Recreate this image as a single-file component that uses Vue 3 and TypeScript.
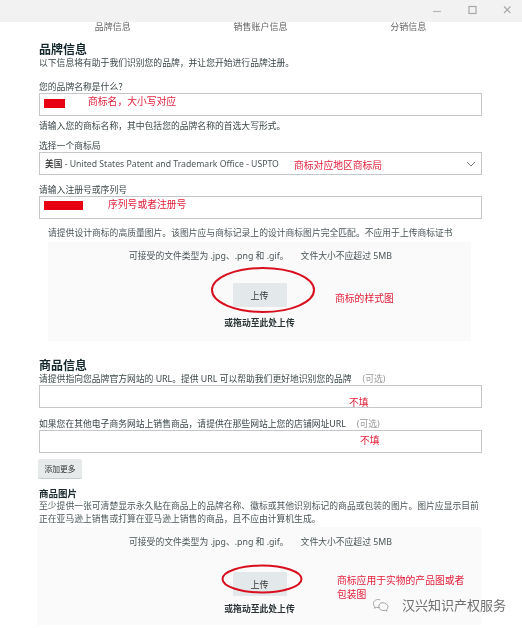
<script setup lang="ts">
const tabs = ['品牌信息', '销售账户信息', '分销信息']
</script>

<template>
  <div class="page">
    <div class="titlebar">
      <svg class="win" width="14" height="14" viewBox="0 0 14 14"><path d="M0 7.5h8" stroke="#b5b5b5" stroke-width="1.2" /></svg>
      <svg class="win" width="14" height="14" viewBox="0 0 14 14"><rect x="2" y="2.5" width="7" height="7" fill="none" stroke="#a8a8a8" stroke-width="1.2" /></svg>
      <svg class="win" width="14" height="14" viewBox="0 0 14 14"><path d="M3 2.5l6.500 6.500M9.500 2.500l-6.500 6.500" stroke="#a8a8a8" stroke-width="1.1" /></svg>
    </div>

    <div class="content">
      <div class="tabs">
        <span v-for="tab in tabs" :key="tab">{{ tab }}</span>
      </div>

      <h2 class="h-first">品牌信息</h2>
      <p class="txt">以下信息将有助于我们识别您的品牌，并让您开始进行品牌注册。</p>

      <p class="txt label l-name">您的品牌名称是什么？</p>
      <div class="field">
        <i class="mask mask-a"></i>
        <span class="note n-name">商标名，大小写对应</span>
      </div>
      <p class="txt help">请输入您的商标名称，其中包括您的品牌名称的首选大写形式。</p>

      <p class="txt label l-office">选择一个商标局</p>
      <div class="field select">
        <span class="val"><b>美国</b> - United States Patent and Trademark Office - USPTO</span>
        <span class="note n-office">商标对应地区商标局</span>
        <svg class="chev" width="10" height="6" viewBox="0 0 10 6"><path d="M1 1l4 4 4-4" fill="none" stroke="#777" stroke-width="1" /></svg>
      </div>

      <p class="txt label l-reg">请输入注册号或序列号</p>
      <div class="field">
        <i class="mask mask-b"></i>
        <span class="note n-reg">序列号或者注册号</span>
      </div>

      <p class="txt hint">请提供设计商标的高质量图片。该图片应与商标记录上的设计商标图片完全匹配。不应用于上传商标证书</p>
      <div class="drop drop-a">
        <p class="txt types">可接受的文件类型为 .jpg、.png 和 .gif。<span class="gap"></span>文件大小不应超过 5MB</p>
        <button class="upload up-a">上传</button>
        <p class="txt or or-a">或拖动至此处上传</p>
        <svg class="ring ring-a" width="104" height="46" viewBox="0 0 104 46"><ellipse cx="52" cy="23" rx="51" ry="22" fill="none" stroke="#d80f1e" stroke-width="2" /></svg>
        <span class="note n-style">商标的样式图</span>
      </div>

      <h2 class="h-second">商品信息</h2>
      <p class="txt label">请提供指向您品牌官方网站的 URL。提供 URL 可以帮助我们更好地识别您的品牌<span class="opt">(可选)</span></p>
      <div class="field">
        <span class="note n-skip-a">不填</span>
      </div>
      <p class="txt label l-shop">如果您在其他电子商务网站上销售商品，请提供在那些网站上您的店铺网址URL<span class="opt">(可选)</span></p>
      <div class="field">
        <span class="note n-skip-b">不填</span>
      </div>
      <button class="more">添加更多</button>

      <p class="txt sub">商品图片</p>
      <p class="txt para">至少提供一张可清楚显示永久贴在商品上的品牌名称、徽标或其他识别标记的商品或包装的图片。图片应显示目前正在亚马逊上销售或打算在亚马逊上销售的商品，且不应由计算机生成。</p>
      <div class="drop drop-b">
        <p class="txt types">可接受的文件类型为 .jpg、.png 和 .gif。<span class="gap"></span>文件大小不应超过 5MB</p>
        <button class="upload up-b">上传</button>
        <p class="txt or or-b">或拖动至此处上传</p>
        <svg class="ring ring-b" width="82" height="30" viewBox="0 0 82 30"><ellipse cx="41" cy="15" rx="39.500" ry="13.500" fill="none" stroke="#d80f1e" stroke-width="2" /></svg>
        <span class="note n-apply">商标应用于实物的产品图或者<br />包装图</span>
      </div>
    </div>

    <div class="mark">
      <svg width="22" height="16" viewBox="0 0 24 16"><g fill="none" stroke="#9a9a9a" stroke-width="1"><path d="M9 2.500c-4-1.500-7.500 1-7.500 4 0 1.500.7 2.500 1.700 3.300l-.4 1.700 2-1c1.200.4 2.500.5 3.500.2" /><path d="M11 5.500c3.500 0 6.500 2 6.500 4.500 0 1.200-.6 2.200-1.500 3l.4 1.700-2-1c-3.500 1-7-1-7-3.700 0-2.500 1.500-4.500 3.600-4.500z" /></g></svg>
      <span>汉兴知识产权服务</span>
    </div>
  </div>
</template>

<style>
html, body { background: #fff; }
</style>

<style scoped>
.page {
  position: relative;
  width: 522px;
  height: 628px;
  overflow: hidden;
  background: #fff;
  color: #3a4648;
  font-family: "Noto Sans", "Noto Sans CJK SC", sans-serif;
  filter: blur(0.35px);
}
.titlebar {
  height: 22px;
  background: #f2f2f2;
  display: flex;
  justify-content: flex-end;
  align-items: center;
  gap: 20px;
  padding-right: 7px;
  box-sizing: border-box;
}
.win { display: block; }
.content { width: 443px; margin-left: 39px; }
.tabs {
  display: grid;
  grid-template-columns: repeat(3, 1fr);
  height: 16px;
  text-align: center;
  font-size: 9px;
  line-height: 10px;
  color: #666;
}
h2 {
  margin: 0;
  font-size: 12px;
  line-height: 14px;
  font-weight: 700;
  color: #12262b;
}
.h-first { margin-top: 5px; }
.h-second { margin-top: 18px; }
.txt { margin: 0; font-size: 8.800px; line-height: 12px; white-space: nowrap; }
.label { height: 12px; line-height: 12px; }
.l-name { margin-top: 12px; }
.l-office { margin-top: 8px; }
.l-reg { margin-top: 9px; }
.l-shop { margin-top: 10px; }
.field {
  position: relative;
  height: 23px;
  box-sizing: border-box;
  border: 1px solid #c4c8c8;
  background: #fff;
}
.help { margin-top: 4px; }
.select { display: flex; align-items: center; padding-left: 5px; font-size: 8.700px; color: #4a5658; }
.select b { font-weight: 500; color: #333; }
.chev { position: absolute; right: 5px; top: 8px; }
.mask { position: absolute; background: #e60012; }
.mask-a { left: 4px; top: 5px; width: 21px; height: 9px; }
.mask-b { left: 4px; top: 4px; width: 39px; height: 9px; }
.note { position: absolute; color: #e2203a; font-size: 9.800px; line-height: 14px; white-space: nowrap; }
.n-name { left: 48px; top: 1px; }
.n-office { left: 254px; top: 6px; }
.n-reg { left: 68px; top: 1px; }
.n-skip-a { left: 309px; top: 10px; }
.n-skip-b { left: 320px; top: 3px; }
.n-style { left: 287px; top: 50px; }
.n-apply { left: 300px; top: 47px; }
.hint { margin: 8px 0 0 9px; color: #4a5658; }
.drop {
  position: relative;
  display: flex;
  flex-direction: column;
  align-items: center;
  background: #fafafa;
  box-sizing: border-box;
}
.drop-a { margin: 3px 11px 0 9px; height: 99px; padding-top: 8px; }
.drop-b { margin: 1px 0 0 -2px; height: 98px; padding-top: 9px; }
.types { color: #4a5658; margin-left: 2px; }
.gap { display: inline-block; width: 12px; }
.upload {
  width: 54px;
  height: 24px;
  padding: 0;
  border: none;
  border-radius: 1px;
  background: #e3e9ea;
  color: #333;
  font-family: inherit;
  font-size: 9px;
}
.up-a { margin-top: 21px; }
.up-b { margin-top: 24px; }
.or { font-weight: 700; color: #2a3436; }
.or-a { margin-top: 10px; }
.or-b { margin-top: 7px; }
.ring { position: absolute; }
.ring-a { left: 163px; top: 25px; }
.ring-b { left: 184px; top: 37px; }
.opt { color: #9a9a9a; margin-left: 11px; }
.more {
  display: block;
  width: 44px;
  height: 20px;
  margin: 6px 0 0 -1px;
  padding: 0;
  border: none;
  border-bottom: 1px solid #c8cccc;
  border-radius: 2px;
  background: #e6eaea;
  color: #333;
  font-family: inherit;
  font-size: 7.800px;
}
.sub { margin-top: 9px; font-weight: 700; font-size: 9.500px; color: #1b2a2d; }
.para { white-space: normal; line-height: 13px; color: #4a5658; }
.mark {
  position: absolute;
  left: 372px;
  top: 595px;
  display: flex;
  align-items: center;
  gap: 8px;
  font-size: 13px;
  line-height: 20px;
  color: #6f6f6f;
  white-space: nowrap;
}
</style>
